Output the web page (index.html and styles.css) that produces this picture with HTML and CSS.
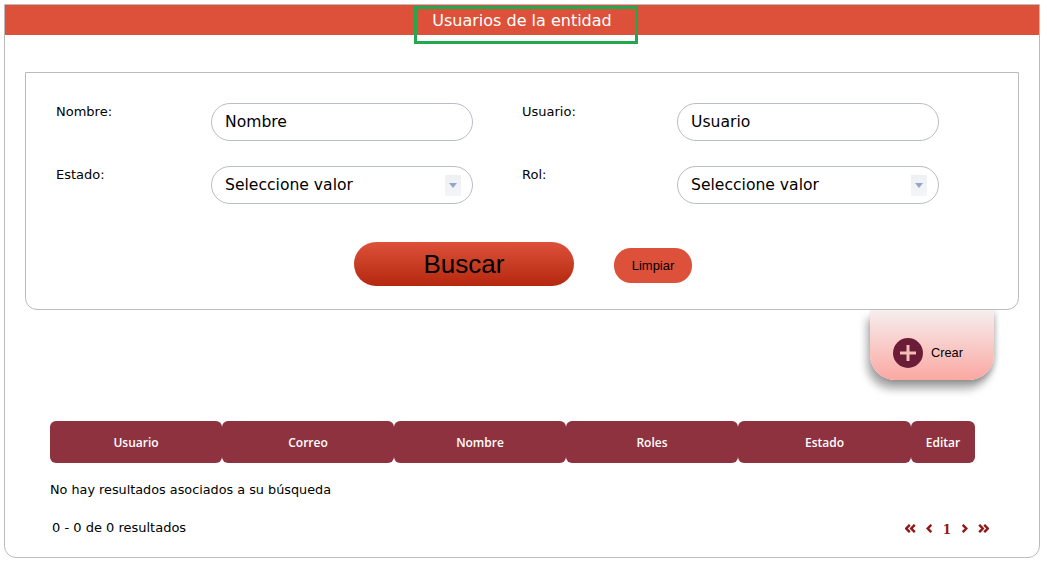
FILE: index.html
```html
<!DOCTYPE html>
<html>
<head>
    <title>Usuarios de la entidad</title>
    <link rel="stylesheet" href="styles.css">
</head>
<body>
    <div class="panel">
        <div class="title-bar">
            <span class="title-text">Usuarios de la entidad</span>
            <span class="title-mark"></span>
        </div>

        <form class="search-card">
            <div class="form-grid">
                <label class="field-label">Nombre:</label>
                <div class="field">Nombre</div>
                <span></span>
                <label class="field-label">Usuario:</label>
                <div class="field">Usuario</div>

                <label class="field-label">Estado:</label>
                <div class="field">Seleccione valor<span class="arrow"></span></div>
                <span></span>
                <label class="field-label">Rol:</label>
                <div class="field">Seleccione valor<span class="arrow"></span></div>
            </div>
            <div class="form-actions">
                <button type="button" class="btn-search">Buscar</button>
                <button type="button" class="btn-clear">Limpiar</button>
            </div>
        </form>

        <div class="create-row">
            <div class="create-tab">
                <span class="create-icon">
                    <svg width="30" height="30" viewBox="0 0 30 30">
                        <circle cx="15" cy="15" r="15" fill="#6b1d38"/>
                        <path d="M15 7v16M7 15h16" stroke="#f2bdb4" stroke-width="3" fill="none"/>
                    </svg>
                </span>
                <span class="create-text">Crear</span>
            </div>
        </div>

        <div class="table-head">
            <div class="head-cell">Usuario</div>
            <div class="head-cell">Correo</div>
            <div class="head-cell">Nombre</div>
            <div class="head-cell">Roles</div>
            <div class="head-cell">Estado</div>
            <div class="head-cell">Editar</div>
        </div>

        <p class="empty-msg">No hay resultados asociados a su búsqueda</p>

        <div class="table-foot">
            <span class="result-count">0 - 0 de 0 resultados</span>
            <div class="pager">
                <svg width="11" height="9" viewBox="0 0 11 9"><path d="M4.8 .8L1.2 4.5l3.6 3.7M9.8 .8L6.2 4.5l3.6 3.7"/></svg>
                <svg width="7" height="9" viewBox="0 0 7 9"><path d="M5.3 .8L1.7 4.5l3.6 3.7"/></svg>
                <span class="page-num">1</span>
                <svg width="7" height="9" viewBox="0 0 7 9"><path d="M1.7 .8l3.6 3.7-3.6 3.7"/></svg>
                <svg width="11" height="9" viewBox="0 0 11 9"><path d="M1.2 .8l3.6 3.7-3.6 3.7M6.2 .8l3.6 3.7-3.6 3.7"/></svg>
            </div>
        </div>
    </div>
</body>
</html>
```

FILE: styles.css
```css
* {
    box-sizing: border-box;
}
body {
    margin: 0;
    font-family: "DejaVu Sans", Verdana, sans-serif;
    font-size: 13px;
    color: #000;
    background-color: #fff;
}
.panel {
    width: 1036px;
    height: 554px;
    margin: 4px 0 0 4px;
    border: 1px solid #bbb;
    border-radius: 0 0 12px 12px;
}
.title-bar {
    position: relative;
    height: 30px;
    background-color: #dd513a;
    color: #fff;
    text-align: center;
    font-size: 16px;
    line-height: 31px;
}
.title-text {
    display: block;
}
.title-mark {
    position: absolute;
    left: 409px;
    top: 1px;
    width: 224px;
    height: 38px;
    border: 3px solid #22a94f;
}
.search-card {
    margin: 37px 20px 0 20px;
    height: 238px;
    padding: 30px 30px 0 30px;
    border: 1px solid #bbb;
    border-radius: 0 0 12px 12px;
    background-color: #fff;
    position: relative;
}
.form-grid {
    display: grid;
    grid-template-columns: 155px 262px 49px 155px 262px;
    grid-auto-rows: 38px;
    row-gap: 25px;
}
.field-label {
    padding-top: 1px;
    line-height: 16px;
}
.field {
    display: flex;
    align-items: center;
    justify-content: space-between;
    padding: 0 11px 0 13px;
    border: 1px solid #b9bdc9;
    border-radius: 19px;
    font-size: 15.6px;
    line-height: 18px;
}
.arrow {
    display: flex;
    align-items: center;
    justify-content: center;
    width: 16px;
    height: 21px;
    background: linear-gradient(#eef0f2, #f3f5f9);
}
.arrow::after {
    content: "";
    border-left: 4px solid transparent;
    border-right: 4px solid transparent;
    border-top: 5px solid #93a6cb;
}
.form-actions {
    display: flex;
    justify-content: center;
    align-items: flex-start;
    gap: 40px;
    margin-top: 38px;
    padding-left: 2px;
}
.form-actions button {
    border: none;
    font-family: "Liberation Sans", Arial, sans-serif;
    color: #000;
    cursor: pointer;
    padding: 0;
}
.btn-search {
    width: 220px;
    height: 44px;
    border-radius: 22px;
    background: linear-gradient(#dd513a, #b5280f);
    font-size: 26px;
}
.btn-clear {
    width: 78px;
    height: 35px;
    margin-top: 6px;
    border-radius: 17px;
    background-color: #dd513a;
    font-size: 13px;
}
.create-row {
    display: flex;
    justify-content: flex-end;
    padding-right: 45px;
}
.create-tab {
    display: flex;
    align-items: center;
    gap: 8px;
    width: 124px;
    height: 70px;
    padding: 16px 0 0 23px;
    border-radius: 0 0 25px 25px;
    background: linear-gradient(#f6eeee, #fba8a2);
    box-shadow: -3px 9px 8px rgba(0, 0, 0, 0.33), 2px 2px 5px rgba(0, 0, 0, 0.18);
    font-family: "Liberation Sans", Arial, sans-serif;
    font-size: 12.8px;
}
.create-icon {
    display: flex;
}
.create-text {
    margin-bottom: 2px;
}
.table-head {
    display: grid;
    grid-template-columns: 172px 172px 172px 172px 173px 64px;
    width: 925px;
    height: 42px;
    margin: 41px 0 0 45px;
}
.head-cell {
    display: flex;
    align-items: center;
    justify-content: center;
    border-radius: 6px;
    background-color: #8f3240;
    color: #fff;
    font-family: "Open Sans", sans-serif;
    font-size: 12px;
    font-weight: 600;
}
.empty-msg {
    margin: 19px 0 0 45px;
    line-height: 16px;
    font-size: 12.8px;
}
.table-foot {
    display: flex;
    justify-content: space-between;
    align-items: center;
    margin-top: 20px;
    padding: 0 50px 0 47px;
    font-size: 13px;
}
.result-count {
    margin-bottom: 2px;
}
.pager {
    display: flex;
    align-items: center;
    gap: 10px;
}
.pager svg {
    fill: none;
    stroke: #941515;
    stroke-width: 2.4;
}
.page-num {
    font-family: "DejaVu Serif", serif;
    font-weight: bold;
    font-size: 12px;
    line-height: 16px;
    color: #941515;
    padding-top: 4px;
}
```
